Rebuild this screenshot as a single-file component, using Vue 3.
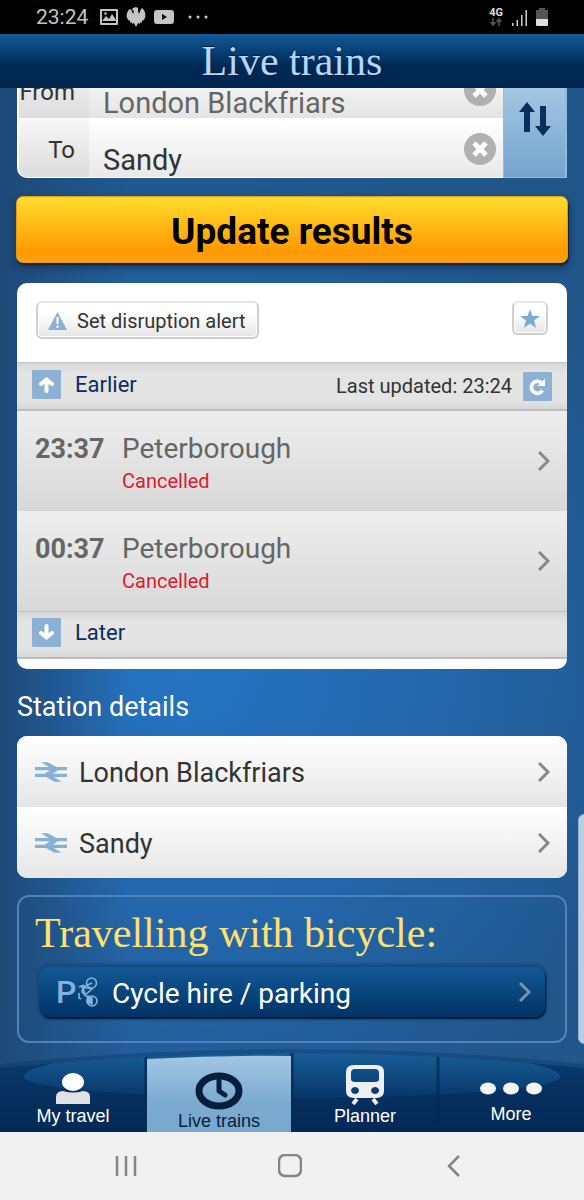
<script setup>
import { ref } from 'vue'

const from = ref('London Blackfriars')
const to = ref('Sandy')
const trains = [
  { time: '23:37', destination: 'Peterborough', status: 'Cancelled' },
  { time: '00:37', destination: 'Peterborough', status: 'Cancelled' }
]
const stations = ['London Blackfriars', 'Sandy']

function swap() {
  const previous = from.value
  from.value = to.value
  to.value = previous
}
</script>

<template>
  <div class="screen">
    <div class="status">
      <span class="clock">23:24</span>
      <svg width="18" height="18" viewBox="0 0 18 18"><path fill="#c4c4c4" fill-rule="evenodd" d="M1 1h16a1 1 0 0 1 1 1v14a1 1 0 0 1-1 1H1a1 1 0 0 1-1-1V2a1 1 0 0 1 1-1zm1 2v12h14V3z" /><path fill="#c4c4c4" d="M2 13l4-5 3 3 3-5 4 6v1z" /><circle cx="5.500" cy="5.500" r="1.300" fill="#c4c4c4" /></svg>
      <svg width="20" height="20" viewBox="0 0 20 20"><path fill="#c4c4c4" d="M7 1l3-1 2 1v3l1 3c1-2 1-4 3-6 3 2 4 7 3 10l-2 3-1-1v3l-2-1v2l-2-1-2 4-2-4-2 1v-2l-2 1v-3l-1 1-2-3C0 8 1 4 4 2c2 1 2 3 3 5l1-3-2-1z" /></svg>
      <svg width="20" height="16" viewBox="0 0 20 16"><path fill="#c4c4c4" fill-rule="evenodd" d="M3 1h14q3 0 3 3v8q0 3-3 3H3q-3 0-3-3V4q0-3 3-3zm5 4v6l5-3z" /></svg>
      <svg class="more-dots" width="20" height="4" viewBox="0 0 20 4" fill="#d0d0d0"><circle cx="2" cy="2" r="1.500" /><circle cx="10" cy="2" r="1.500" /><circle cx="18" cy="2" r="1.500" /></svg>
      <span class="spacer"></span>
      <span class="network">
        <b>4G</b>
        <svg width="12" height="8" viewBox="0 0 12 8" fill="none" stroke="#555" stroke-width="1.600"><path d="M3 0v7M.5 4L3 7l2.500-3M9 8V1M6.500 4L9 1l2.500 3" /></svg>
      </span>
      <svg width="16" height="17" viewBox="0 0 16 17" fill="#cfcfcf"><path d="M0 14h1.500v3H0zM4.500 11H6v6H4.500zM9 6h1.500v11H9zM13.500 1H15v16h-1.500z" /></svg>
      <svg width="12" height="18" viewBox="0 0 12 18"><path fill="#555" d="M3 0h6v2h3v10H0V2h3z" /><path fill="#dedede" d="M0 11h12v6q0 1-1 1H1q-1 0-1-1z" /></svg>
    </div>

    <header class="titlebar"><h1>Live trains</h1></header>

    <main class="content">
      <form class="journey" @submit.prevent>
        <div class="fields">
          <div class="field from">
            <label for="from">From</label>
            <input id="from" v-model="from" type="text" />
            <button type="button" class="clear" aria-label="Clear from" @click="from = ''">
              <svg width="32" height="32" viewBox="0 0 32 32"><circle cx="16" cy="16" r="16" fill="#b0b0b0" /><path d="M10 10l12 12M22 10L10 22" stroke="#fff" stroke-width="5" /></svg>
            </button>
          </div>
          <div class="field">
            <label for="to">To</label>
            <input id="to" v-model="to" type="text" />
            <button type="button" class="clear" aria-label="Clear to" @click="to = ''">
              <svg width="32" height="32" viewBox="0 0 32 32"><circle cx="16" cy="16" r="16" fill="#b0b0b0" /><path d="M10 10l12 12M22 10L10 22" stroke="#fff" stroke-width="5" /></svg>
            </button>
          </div>
        </div>
        <button type="button" class="swap" aria-label="Swap stations" @click="swap">
          <svg width="32" height="34" viewBox="0 0 32 34" fill="#082f5e"><path d="M8 0l8 10h-5v20H5V10H0zM24 34l-8-10h5V4h6v20h5z" /></svg>
        </button>
      </form>

      <button type="button" class="update">Update results</button>

      <section class="card results">
        <div class="tools">
          <button type="button" class="tool alert">
            <svg width="19" height="18" viewBox="0 0 19 18"><path fill="#8ab1d3" d="M9.500 0L19 18H0z" /><path d="M9.500 5v7M9.500 13.500v2.500" stroke="#fff" stroke-width="2" /></svg>
            Set disruption alert
          </button>
          <button type="button" class="tool star" aria-label="Favourite">
            <svg width="20" height="19" viewBox="0 0 20 19"><path fill="#7faad0" d="M10 0l2.400 7H20l-6 4.500 2.200 7.500L10 14.600 3.800 19 6 11.500 0 7h7.600z" /></svg>
          </button>
        </div>
        <div class="strip">
          <button type="button" class="page">
            <svg width="29" height="29" viewBox="0 0 29 29"><rect width="29" height="29" rx="1" fill="#8bb2d5" /><path d="M14.500 21V10M9 14l5.500-4.500L20 14" fill="none" stroke="#fff" stroke-width="4" stroke-linecap="round" /></svg>
            Earlier
          </button>
          <span class="updated">Last updated: 23:24</span>
          <button type="button" class="refresh" aria-label="Refresh">
            <svg width="29" height="29" viewBox="0 0 29 29"><rect width="29" height="29" rx="1" fill="#8bb2d5" /><path d="M19.500 18.500a6 6 0 1 1-1.500-8" fill="none" stroke="#fff" stroke-width="3.600" /><path d="M22 6.500V14h-7.500z" fill="#fff" /></svg>
          </button>
        </div>
        <a v-for="t in trains" :key="t.time" href="#" class="train">
          <strong>{{ t.time }}</strong>
          <span class="trip"><span class="dest">{{ t.destination }}</span><span class="state">{{ t.status }}</span></span>
          <svg class="chev" width="12" height="20" viewBox="0 0 12 20"><path d="M1 1l9 9-9 9" /></svg>
        </a>
        <div class="strip later">
          <button type="button" class="page">
            <svg width="29" height="29" viewBox="0 0 29 29"><rect width="29" height="29" rx="1" fill="#8bb2d5" /><path d="M14.500 8v11M9 15l5.500 4.500L20 15" fill="none" stroke="#fff" stroke-width="4" stroke-linecap="round" /></svg>
            Later
          </button>
        </div>
      </section>

      <h2 class="heading">Station details</h2>
      <section class="card stations">
        <a v-for="s in stations" :key="s" href="#" class="station">
          <svg width="32" height="20" viewBox="0 0 96 60" fill="#86b0d4"><path d="M0 15h96v10H0zM0 35h96v10H0z" /><path d="M18 1h20L74 20 48 40 80 59H58L24 40 50 20z" /></svg>
          <span>{{ s }}</span>
          <svg class="chev" width="12" height="20" viewBox="0 0 12 20"><path d="M1 1l9 9-9 9" /></svg>
        </a>
      </section>

      <section class="bicycle">
        <h2>Travelling with bicycle:</h2>
        <a href="#" class="cycle">
          <span class="p">P</span>
          <svg width="20" height="30" viewBox="0 0 20 30" fill="none" stroke="#84b1df" stroke-width="1.600"><circle cx="13.500" cy="6" r="5" /><circle cx="14" cy="24" r="5" /><path d="M14 6L5 10l2 8 7-6-9-2zM7 18l7 6M1 10l4-1.500v3M1 16v5l2 1M5 10l-1 5 3 3" /><path d="M10 19l4 2v6l-5-2z" fill="#84b1df" /></svg>
          <span class="cycle-name">Cycle hire / parking</span>
          <svg class="chev" width="12" height="20" viewBox="0 0 12 20"><path d="M1 1l9 9-9 9" /></svg>
        </a>
      </section>
    </main>

    <nav class="tabs">
      <svg class="arc" viewBox="0 0 584 80" preserveAspectRatio="none">
        <defs>
          <linearGradient id="base" x1="0" y1="0" x2="0" y2="1"><stop offset="0" stop-color="#0b3d73" /><stop offset=".5" stop-color="#06305f" /><stop offset="1" stop-color="#022956" /></linearGradient>
          <linearGradient id="glow" x1="0" y1="0" x2="0" y2="1"><stop offset="0" stop-color="#1b619c" /><stop offset="1" stop-color="#06376b" /></linearGradient>
          <linearGradient id="live" x1="0" y1="0" x2="0" y2="1"><stop offset="0" stop-color="#a2c7e4" /><stop offset=".6" stop-color="#7daad1" /><stop offset="1" stop-color="#79a7cf" /></linearGradient>
          <clipPath id="shape"><path d="M0 16Q146 1 292 1T584 16V80H0z" /></clipPath>
        </defs>
        <path d="M0 15Q146 0 292 0T584 15" fill="none" stroke="#0a3261" stroke-opacity=".35" stroke-width="6" />
        <g clip-path="url(#shape)">
          <rect width="584" height="80" fill="url(#base)" />
          <path d="M24 25A268 30 0 0 1 560 25A268 21 0 0 1 24 25z" fill="url(#glow)" />
          <path d="M146 0v80M292 0v80M438 0v80" stroke="#052b56" stroke-opacity=".8" stroke-width="3" />
          <path d="M147 7Q220 3 291 4V80H147z" fill="url(#live)" />
        </g>
      </svg>
      <button type="button" class="tab">
        <svg width="34" height="32" viewBox="0 0 34 32"><ellipse cx="17" cy="9" rx="11" ry="9" fill="#fff" /><path fill="#dfe1e4" d="M0 31v-7q0-6 7-6 10 3 20 0 7 0 7 6v7z" /></svg>
        <span>My travel</span>
      </button>
      <button type="button" class="tab active">
        <svg width="48" height="38" viewBox="0 0 48 38" fill="none" stroke="#041f3d"><ellipse cx="24" cy="19" rx="20" ry="15" stroke-width="7" /><path d="M24 9v10l6 4" stroke-width="5" stroke-linecap="round" stroke-linejoin="round" /></svg>
        <span>Live trains</span>
      </button>
      <button type="button" class="tab">
        <svg width="38" height="40" viewBox="0 0 38 40"><path fill="#eceef1" fill-rule="evenodd" d="M8 0h22q8 0 8 7v19q0 7-8 7H8q-8 0-8-7V7q0-7 8-7zm1 4q-4 0-4 4v6q0 3 4 3h20q4 0 4-3V8q0-4-4-4zM9 22a4 3.500 0 1 0 .1 0zM29 22a4 3.500 0 1 0 .1 0z" /><path d="M11 34l-4 5M27 34l4 5" stroke="#eceef1" stroke-width="4" /></svg>
        <span>Planner</span>
      </button>
      <button type="button" class="tab more">
        <svg width="62" height="13" viewBox="0 0 62 13" fill="#f1f3f5"><ellipse cx="8" cy="6.500" rx="8" ry="6" /><ellipse cx="31" cy="6.500" rx="8" ry="6" /><ellipse cx="54" cy="6.500" rx="8" ry="6" /></svg>
        <span>More</span>
      </button>
    </nav>

    <div class="system">
      <button type="button" aria-label="Recent apps"><svg width="22" height="22" viewBox="0 0 22 22"><path d="M2 1v20M11 1v20M20 1v20" /></svg></button>
      <button type="button" aria-label="Home"><svg width="24" height="24" viewBox="0 0 24 24"><rect x="1" y="1" width="22" height="21" rx="6" /></svg></button>
      <button type="button" aria-label="Back"><svg width="14" height="22" viewBox="0 0 14 22"><path d="M12 1L2 11l10 10" /></svg></button>
    </div>
    <div class="edge"></div>
  </div>
</template>

<style>
body { background: #205a96; }
</style>

<style scoped>
* { box-sizing: border-box; }
.screen {
  position: relative;
  display: flex;
  flex-direction: column;
  min-height: 100vh;
  overflow: hidden;
  font-family: Roboto, "Liberation Sans", sans-serif;
  background:
    linear-gradient(90deg, #1e4a78 0, rgba(30, 74, 120, 0) 22%),
    radial-gradient(ellipse 85% 44% at 32% 55%, #2574c2 0, #2468ae 45%, #20568a 100%);
}
h1, h2 { margin: 0; font-weight: 400; }
button { border: 0; padding: 0; background: none; font-family: inherit; cursor: pointer; }
a { color: inherit; text-decoration: none; }
svg { display: block; flex: none; }

.status { display: flex; align-items: center; height: 34px; padding: 0 36px; background: #000; color: #c4c4c4; }
.clock { margin-right: 12px; font-size: 21px; }
.status svg { margin-right: 8px; }
.status .more-dots { margin-left: 6px; }
.spacer { flex: 1; }
.network { display: flex; flex-direction: column; align-items: center; margin-right: 9px; font-size: 11px; line-height: 10px; color: #ddd; }
.network svg { margin: 0; }
.status > svg:last-child { margin-right: 0; }

.titlebar {
  z-index: 1;
  height: 54px;
  background: linear-gradient(#155b98, #013364 48%, #002853 60%, #00264f);
  color: #b3d6fa;
  text-align: center;
}
.titlebar h1 { font: 42px/54px "Liberation Serif", serif; text-shadow: 0 -1px 1px #001a38; }

.content { flex: 1; padding: 0 17px 8px; }
.journey { display: flex; margin-top: -29px; }
.fields { flex: 1; border-left: 2px solid #fff; border-bottom: 1px solid #fff; border-radius: 0 0 0 10px; overflow: hidden; background: #fff; }
.field { display: flex; align-items: center; height: 58px; padding-right: 7px; background: linear-gradient(#fff, #e8e8e8); }
.field.from { height: 60px; border-bottom: 1px solid #fff; background: linear-gradient(#fff, #e4e4e4); }
.field label { flex: none; align-self: stretch; width: 70px; padding-right: 14px; background: linear-gradient(#f7f7f7, #dcdcdc); color: #333; font-size: 24px; line-height: 62px; text-align: right; }
.from label { line-height: 66px; }
.field input { flex: 1; min-width: 0; height: 58px; padding: 24px 0 0 14px; border: 0; background: none; color: #333; font: 29px/34px Roboto, sans-serif; outline: 0; }
.from input { padding-top: 28px; color: #666; }
.clear { padding-top: 2px; }
.swap { display: grid; place-items: center; width: 64px; padding-top: 2px; border: 1px solid #8fbbe0; border-width: 0 2px 1px 1px; background: linear-gradient(#b4d2ea, #74a3cd); }

.update {
  display: block;
  width: calc(100% + 2px);
  height: 67px;
  margin: 18px -1px 20px;
  padding-top: 4px;
  border: 1px solid #e79a10;
  border-radius: 7px;
  background: linear-gradient(#ffde2e, #ff9800 85%, #ffa41c);
  box-shadow: 1px 2px 1px #1b2434, 0 4px 8px rgba(0, 20, 50, .5);
  color: #000;
  font-size: 37px;
  font-weight: 700;
}
.card { overflow: hidden; border-radius: 10px; background: #fff; }
.results { padding-bottom: 10px; color: #333; }
.tools { display: flex; align-items: flex-start; justify-content: space-between; height: 79px; padding: 18px 19px; }
.tool { display: flex; align-items: center; border: 2px solid #cfcfcf; border-top-color: #e6e6e6; border-radius: 6px; background: linear-gradient(#fff 30%, #e6e6e6); box-shadow: inset 0 0 0 1px #fff; color: #333; }
.alert { gap: 10px; height: 38px; padding: 2px 12px 0 10px; font-size: 20px; }
.star { justify-content: center; width: 36px; height: 34px; }
.strip { display: flex; align-items: center; height: 49px; padding: 0 15px 4px; border-top: 1px solid #c4c4c4; border-bottom: 2px solid #bdbdbd; background: linear-gradient(#d7d7d7, #e4e4e4 20%, #e4e4e4 80%, #d7d7d7); }
.page { display: flex; align-items: center; gap: 14px; color: #082e60; font-size: 22px; }
.updated { margin: 4px 11px 0 auto; font-size: 20px; }
.refresh { margin-top: 4px; }
.train { display: flex; align-items: center; height: 100px; padding: 0 17px 0 18px; background: linear-gradient(#eee, #d8d8d8); color: #666; }
.train strong { width: 87px; font-size: 27px; line-height: 32px; padding-bottom: 24px; }
.trip { display: flex; flex: 1; flex-direction: column; padding-top: 5px; }
.dest { font-size: 28px; line-height: 34px; }
.state { color: #dc1c2e; font-size: 20px; line-height: 30px; }
.later { height: 48px; }
.chev { fill: none; stroke: #888; stroke-width: 3; }

.heading { padding-top: 9px; color: #fff; font-size: 27px; line-height: 58px; }
.station { display: flex; align-items: center; gap: 12px; height: 71px; padding: 0 17px 0 18px; background: linear-gradient(#fff, #e6e6e6); color: #333; font-size: 27px; }
.station span { flex: 1; padding-top: 2px; }

.bicycle { margin-top: 17px; padding: 12px 20px 24px; border: 2px solid #4f83ba; border-radius: 12px; }
.bicycle h2 { margin-left: -4px; color: #ffe070; font: 42px/48px "Liberation Serif", serif; white-space: nowrap; }
.cycle { display: flex; align-items: center; height: 52px; margin-top: 8px; padding: 2px 14px 0 17px; border-radius: 11px; background: linear-gradient(#145a98, #003366); box-shadow: inset 0 2px 0 #134b82, 1px 2px 2px #04172e, 0 0 4px #123b69; color: #fff; font-size: 28px; }
.cycle .chev { stroke: #7e93a8; }
.p { width: 22px; color: #84b1df; font-size: 32px; font-weight: 500; }
.cycle-name { flex: 1; margin-left: 14px; padding-top: 2px; }

.tabs { position: relative; display: grid; grid-template-columns: repeat(4, 1fr); height: 80px; }
.arc { position: absolute; inset: 0; width: 100%; height: 100%; overflow: visible; }
.tab { position: relative; display: flex; flex-direction: column; align-items: center; justify-content: flex-end; gap: 1px; padding-bottom: 6px; color: #fff; font: 18px/20px "Liberation Sans", sans-serif; }
.tab.active { padding-bottom: 1px; color: #041f3d; }
.tab.more { gap: 9px; padding-bottom: 8px; }

.system { display: flex; align-items: center; justify-content: space-between; height: 68px; padding: 0 100px 0 96px; background: #f1f1f1; }
.system button { display: grid; place-items: center; width: 60px; height: 48px; }
.system svg { fill: none; stroke: #858585; stroke-width: 2.500; }
.edge { position: absolute; right: -6px; bottom: 156px; width: 12px; height: 230px; border: 1px solid #90b0cf; border-radius: 6px; background: #bccddf; }
</style>
